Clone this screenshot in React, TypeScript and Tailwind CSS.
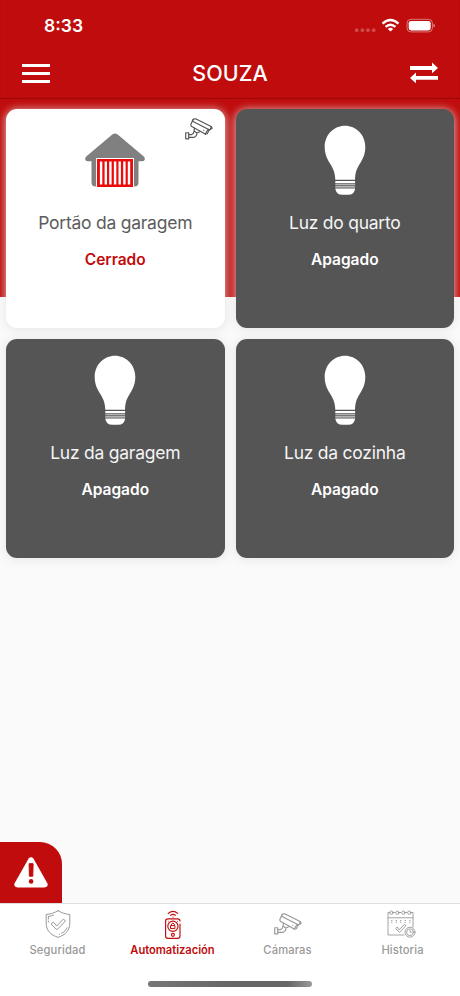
import React from "react";

function CameraIcon({ className }: { className: string }) {
  return (
    <svg viewBox="0 0 28 22" className={className} fill="none" stroke="currentColor" strokeWidth="1.15" strokeLinejoin="round" strokeLinecap="round">
      <path d="M8.2 1.2 10.6.7 26.2 8.6 25.5 11.2 24.2 11.8 22.3 15.8 20.2 16.1 6.3 8.3 5.8 6.5Z" />
      <path d="M8.2 1.2 7.6 3.2 23.2 11.2 24.2 11.8M23.2 11.2 20.2 16.1M24 12.2 27.2 10.2 26.2 8.6M9.5 10.1 9 13.1 12 15.1 15.2 13.6M9 13.1 8.2 15.6 6.6 16.6H3.7M12 15.1 11.4 17.6 9.2 19.4H3.7M.7 14.7H3.7V20.8H.7Z" />
      <path d="M18.8 12.3h.1" />
    </svg>
  );
}

function HouseIcon() {
  return (
    <svg viewBox="0 0 60 56" className="h-[56px] w-[60px]">
      <path d="M27.3 1.6Q30 -.8 32.7 1.6L58.5 23.2Q60.4 25 59.6 27Q59 28.3 57 28.3H53.5V49.5Q53.5 53.5 49.5 53.5H10.5Q6.5 53.5 6.5 49.5V28.3H3Q1 28.3.4 27Q-.4 25 1.5 23.2Z" fill="#808080" />
      <path d="M11 25h38v30H11z" fill="#fff" />
      <path d="M12 26h36v28H12z" fill="#ed0a0a" />
      <path d="M16.1 28.5v23M20.8 28.5v23M25.4 28.5v23M30.1 28.5v23M34.7 28.5v23M39.4 28.5v23M44 28.5v23" stroke="#fff" strokeWidth="2.4" />
    </svg>
  );
}

function BulbIcon() {
  return (
    <svg viewBox="0 0 42 70" className="h-[70px] w-[42px]" fill="#fff">
      <path d="M21 .8C32 .8 41.3 9.8 41.3 21.9C41.3 29 39 33.4 36 38.4C32.5 44 31.2 47.4 31 54.7H11.3C11 47.4 9.5 44 6 38.4C3 33.4.7 29 .7 21.9C.7 9.8 10 .8 21 .8Z" />
      <path d="M11.3 56h19.8v2.2H11.3zM11.3 63.5h19.8Q30.5 69.8 24 69.8h-5.5Q12 69.8 11.3 63.5Z" />
      <path d="M11.3 59.3h19.8v.9H11.3zM11.3 61.2h19.8v1.3H11.3z" opacity=".75" />
    </svg>
  );
}

type Device = { name: string; state: string; gate?: boolean };

const devices: Device[] = [
  { name: "Portão da garagem", state: "Cerrado", gate: true },
  { name: "Luz do quarto", state: "Apagado" },
  { name: "Luz da garagem", state: "Apagado" },
  { name: "Luz da cozinha", state: "Apagado" },
];

function DeviceCard({ device }: { device: Device }) {
  const { gate } = device;
  return (
    <section className={`relative flex h-[219px] flex-col items-center rounded-[11px] shadow-[0_1px_9px_1px_rgba(226,226,226,0.75)] ${gate ? "bg-white text-[#555]" : "bg-[#555] text-white"}`}>
      {gate && <CameraIcon className="absolute top-[9px] right-[11.5px] h-[22px] w-[28px] text-[#555]" />}
      <div className={`flex h-[87px] items-start ${gate ? "pt-[24px]" : "pt-[16px]"}`}>{gate ? <HouseIcon /> : <BulbIcon />}</div>
      <h2 className={`mt-[14px] text-[17.5px] leading-[26px] font-normal tracking-[-0.25px] ${gate ? "text-[#5c5c5c]" : "text-[#f4f4f4]"}`}>{device.name}</h2>
      <p className={`mt-[13px] text-[15.5px] leading-[22px] font-semibold ${gate ? "text-[#c00c0c]" : ""}`}>{device.state}</p>
    </section>
  );
}

function ShieldIcon() {
  return (
    <svg viewBox="0 0 26 28" className="h-[28px] w-[26px]" fill="none" stroke="currentColor" strokeWidth="1" strokeLinecap="round" strokeLinejoin="round">
      <path d="M13 .7C10 2.6 5.5 4.2 1.2 4.5V13C1.2 20.5 5.5 25 13 27.3C20.5 25 24.8 20.5 24.8 13V4.5C20.5 4.2 16 2.6 13 .7Z" />
      <path d="M3.4 9V6.5C5.6 6.1 7 5.7 8.5 5.1M3.4 11v1M16.5 23.3C19.4 21.9 21 20.2 22 17.8M14.5 24.2h.1" />
      <path d="M8.1 12.2Q6.9 12.7 6.1 14.2L11.2 19.2Q12.2 19.7 13 18.8L20.3 11.1Q20.1 9.8 18.3 9.1L12 15.8Z" />
    </svg>
  );
}

function IntercomIcon() {
  return (
    <svg viewBox="0 0 18 30" className="h-[30px] w-[18px]" fill="none" stroke="currentColor" strokeWidth="1.15" strokeLinecap="round">
      <path d="M4.3 3.4Q9 -.6 13.7 3.4M6.6 5.2Q9 3.4 11.4 5.2M9 7h.1M16 14V26Q16 28.3 13.5 28.3H4Q1.6 28.3 1.6 26V11Q1.6 8.9 4 8.9H13.5Q16 8.9 16 11" />
      <circle cx="8.9" cy="16.2" r="5.1" />
      <path d="M6.9 15.6h4v3H6.9zM7.5 15.3v-1.2Q8.9 12.1 10.3 14.1V15.3" strokeWidth="1" />
      <circle cx="8.9" cy="24.8" r="1.5" />
      <path d="M4.2 11.3h.1M13.5 11.3h.1" strokeWidth=".8" />
    </svg>
  );
}

function CalendarIcon() {
  return (
    <svg viewBox="0 0 29 28" className="h-[28px] w-[29px]" fill="none" stroke="currentColor" strokeWidth=".9" strokeLinecap="round" strokeLinejoin="round">
      <path d="M3 2.5H1V25H17M5.3 2.5h2.5M11.3 2.5h2.5M17.3 2.5h2.5M23.2 2.5H26V17M1 7.8h25" />
      <circle cx="4.4" cy="2.7" r="1.7" /><circle cx="10.4" cy="2.7" r="1.7" /><circle cx="16.4" cy="2.7" r="1.7" /><circle cx="22.3" cy="2.7" r="1.7" />
      <path d="M4.5 10.5h.5M9 10.5h.5M13.5 10.5h.5M18 10.5h.5M22.5 10.5h.5M4.5 12.3h.5M9 12.3h.5M13.5 12.3h.5M18 12.3h.5M22.5 12.3h.5" />
      <path d="M10 17.2 8.7 18.8 12.5 22.3 19 15.7 17.5 14.3 12.3 19.6Z" />
      <circle cx="23" cy="22.2" r="5" /><circle cx="23" cy="22.2" r="3.4" />
      <path d="M23 20.6v1.6h1.4" />
    </svg>
  );
}

export default function App() {
  return (
    <div className="flex h-[996px] w-[460px] flex-col overflow-hidden bg-[#fafafa] font-['Inter','Liberation_Sans',sans-serif]">
      <header className="h-[99px] shrink-0 bg-[#c00c0c] text-white shadow-[inset_0_-1px_1px_rgba(80,0,0,0.35)]">
        <div className="flex h-[48px] items-center justify-between pt-[3px] pr-[25px] pl-[44px]">
          <time className="text-[17.5px] leading-[24px] font-semibold">8:33</time>
          <svg viewBox="0 0 82 16" className="h-[16px] w-[82px]" fill="#fff">
            <g opacity=".25"><circle cx="3.7" cy="12.2" r="1.9" /><circle cx="9.4" cy="12.2" r="1.9" /><circle cx="15" cy="12.2" r="1.9" /><circle cx="20.7" cy="12.2" r="1.9" /></g>
            <g fill="none" stroke="#fff" strokeWidth="2.5"><path d="M29.5 5.7Q37.5-1.7 45.5 5.7M32.6 8.9Q37.5 4.5 42.4 8.9" /></g>
            <path d="M34.8 10.9Q37.5 8.6 40.2 10.9L37.5 13.6Z" />
            <rect x="54" y="1.3" width="25.4" height="12.6" rx="3.9" fill="none" stroke="#fff" opacity=".45" />
            <rect x="55.7" y="2.9" width="22" height="9.5" rx="2.4" />
            <path d="M80.4 5.8Q82 6.5 82 7.7T80.4 9.6Z" opacity=".5" />
          </svg>
        </div>
        <div className="flex h-[50px] items-center justify-between px-[22px]">
          <div className="flex w-[28px] flex-col gap-[5px]">
            <i className="h-[3px] bg-white" /><i className="h-[3px] bg-white" /><i className="h-[3px] bg-white" />
          </div>
          <h1 className="text-[21.5px] leading-[28px] font-medium">SOUZA</h1>
          <svg viewBox="0 0 28 22" className="h-[22px] w-[28px]" fill="#fff"><path d="M0 4.1h22V.6L28 6l-6 5.2V7.9H0zM28 14.1H6v-3.5L0 16l6 5.2v-3.4h22z" /></svg>
        </div>
      </header>
      <main className="grid h-[743px] shrink-0 grid-cols-2 content-start gap-[11px] bg-[linear-gradient(#c00c0c_198px,#fafafa_198px)] px-[6px] pt-[10px]">
        {devices.map((device) => <DeviceCard key={device.name} device={device} />)}
      </main>
      <button className="flex h-[61px] w-[61.5px] shrink-0 items-center justify-end rounded-tr-[22px] bg-[#c00c0c] pr-[14px]">
        <svg viewBox="0 0 34 31" className="h-[31px] w-[34px]">
          <path d="M14.6 1.6Q17 -1 19.4 1.6L33.5 26.5Q34.5 30 30.5 30.4H3.5Q-.5 30 .5 26.5Z" fill="#fff" />
          <path d="M15.1 6.7h4l-.3 12.5h-3.4z" fill="#c00c0c" stroke="#c00c0c" strokeLinejoin="round" /><circle cx="17.1" cy="24.4" r="2.3" fill="#c00c0c" />
        </svg>
      </button>
      <nav className="h-[93px] shrink-0 border-t border-[#dfdfdf] bg-white text-[#999]">
        <div className="grid h-[73px] grid-cols-4 text-[11.2px] leading-[16px] font-medium tracking-[0.12px]">
          <div className="flex flex-col items-center pt-[6px]"><div className="h-[32px]"><ShieldIcon /></div>Seguridad</div>
          <div className="flex flex-col items-center pt-[6px] font-semibold tracking-[-0.04px] text-[#c00c0c]"><div className="h-[32px]"><IntercomIcon /></div>Automatización</div>
          <div className="flex flex-col items-center pt-[6px]"><div className="h-[32px] pt-[3px]"><CameraIcon className="h-[22px] w-[28px]" /></div>Cámaras</div>
          <div className="flex flex-col items-center pt-[6px]"><div className="h-[32px] pr-[2px]"><CalendarIcon /></div>Historia</div>
        </div>
        <div className="mx-auto mt-[4px] h-[6px] w-[164px] rounded-full bg-[linear-gradient(90deg,#777,#666_50%,#666_85%,#999)]" />
      </nav>
    </div>
  );
}
